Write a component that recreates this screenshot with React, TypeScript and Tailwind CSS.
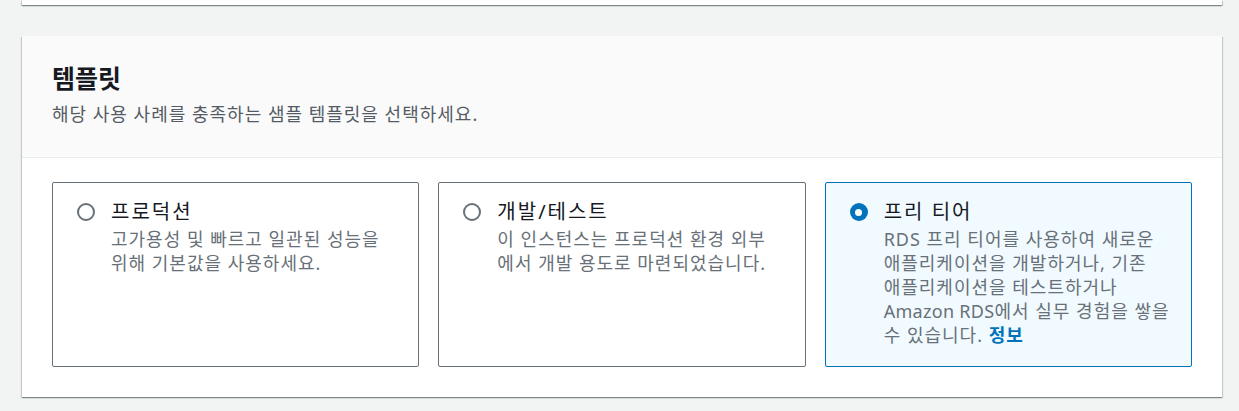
import React from 'react'

const font = { fontFamily: '"Noto Sans", "Noto Sans CJK KR", sans-serif' }

type Option = {
  title: string
  lines: React.ReactNode
  selected?: boolean
}

const options: Option[] = [
  {
    title: '프로덕션',
    lines: (
      <>
        고가용성 및 빠르고 일관된 성능을
        <br />
        위해 기본값을 사용하세요.
      </>
    ),
  },
  {
    title: '개발/테스트',
    lines: (
      <>
        이 인스턴스는 프로덕션 환경 외부
        <br />
        에서 개발 용도로 마련되었습니다.
      </>
    ),
  },
  {
    title: '프리 티어',
    selected: true,
    lines: (
      <>
        RDS 프리 티어를 사용하여 새로운
        <br />
        애플리케이션을 개발하거나, 기존
        <br />
        애플리케이션을 테스트하거나
        <br />
        <span className="tracking-[0.3px]">Amazon RDS</span>에서 실무 경험을 쌓을
        <br />
        수 있습니다. <span className="font-bold text-[#0073bb]">정보</span>
      </>
    ),
  },
]

function Radio({ checked }: { checked?: boolean }) {
  if (checked) {
    return (
      <span className="mt-[4px] flex h-[18px] w-[18px] shrink-0 items-center justify-center rounded-full bg-[#0073bb]">
        <span className="h-[7px] w-[7px] rounded-full bg-white" />
      </span>
    )
  }
  return <span className="mt-[4px] h-[18px] w-[18px] shrink-0 rounded-full border-2 border-[#687078] bg-white" />
}

function TemplateCard({ opt }: { opt: Option }) {
  return (
    <div
      className={
        'flex h-[185px] gap-[16px] rounded-[2px] border px-[24px] pt-[16px] ' +
        (opt.selected ? 'border-[#0073bb] bg-[#f1faff]' : 'border-[#687078] bg-white')
      }
    >
      <Radio checked={opt.selected} />
      <div>
        <div className="text-[20px] leading-[26px] tracking-[2px] text-[#16191f]">{opt.title}</div>
        <div className="mt-[2px] whitespace-nowrap text-[18px] leading-[24px] tracking-[1px] text-[#687078]">
          {opt.lines}
        </div>
      </div>
    </div>
  )
}

export default function App() {
  return (
    <div className="min-h-[411px] w-[1239px] bg-[#f2f3f3]" style={font}>
      <div className="ml-[22px] h-[5px] w-[1200px] bg-white shadow-[0_1px_1px_0_rgba(0,28,36,0.3),1px_1px_1px_0_rgba(0,28,36,0.15),-1px_1px_1px_0_rgba(0,28,36,0.15)]" />
      <section className="ml-[22px] mt-[31px] w-[1200px] bg-white shadow-[0_1px_1px_0_rgba(0,28,36,0.3),1px_1px_1px_0_rgba(0,28,36,0.15),-1px_1px_1px_0_rgba(0,28,36,0.15)]">
        <header className="h-[122px] border-b border-[#eaeded] bg-[#fafafa] px-[30px] pt-[24px]">
          <h2 className="text-[25px] font-bold leading-[36px] text-[#16191f]">템플릿</h2>
          <p className="mt-[6px] text-[18px] leading-[24px] tracking-[1px] text-[#545b64]">
            해당 사용 사례를 충족하는 샘플 템플릿을 선택하세요.
          </p>
        </header>
        <div className="grid grid-cols-3 gap-[19px] px-[30px] pb-[30px] pt-[24px]">
          {options.map((o) => (
            <TemplateCard key={o.title} opt={o} />
          ))}
        </div>
      </section>
    </div>
  )
}
